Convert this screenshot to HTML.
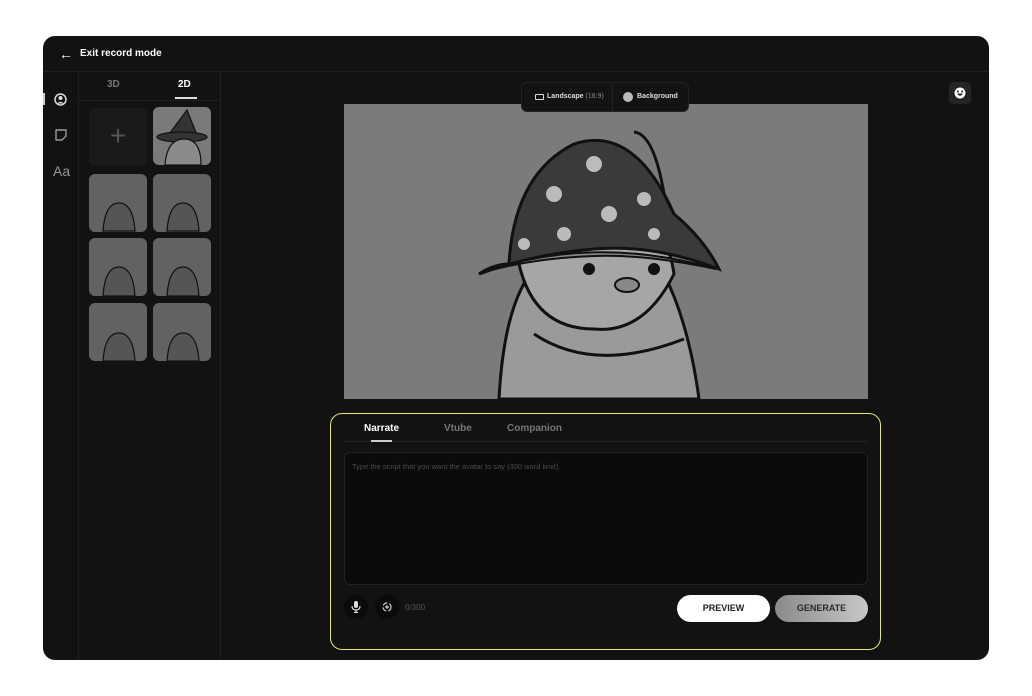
<!DOCTYPE html><html><head><style>
*{box-sizing:border-box;margin:0;padding:0}
body{width:1032px;height:696px;background:#fff;font-family:"Liberation Sans",sans-serif;position:relative;overflow:hidden}
.card{position:absolute;left:43px;top:36px;width:946px;height:624px;background:#121212;border-radius:12px;overflow:hidden}
.a{position:absolute}
.th{position:absolute;width:58px;height:58px;border-radius:6px;background:#626262;overflow:hidden}
</style></head><body>
<div class="card">
 <div class="a" style="left:0;top:35px;width:946px;height:1px;background:#1e1e1e"></div>
 <div class="a" style="left:16px;top:10px;color:#fff;font-size:14px;font-weight:bold">&#8592;</div>
 <div class="a" style="left:37px;top:12px;color:#fff;font-size:10px;font-weight:bold">Exit record mode</div>
 <div class="a" style="left:35px;top:36px;width:1px;height:588px;background:#1e1e1e"></div>
 <div class="a" style="left:177px;top:36px;width:1px;height:588px;background:#1e1e1e"></div>
 <div class="a" style="left:0;top:57px;width:2px;height:12px;background:#ccc"></div>
 <svg class="a" style="left:11px;top:57px" width="13" height="13" viewBox="0 0 13 13"><circle cx="6.5" cy="6.5" r="5.5" fill="none" stroke="#ddd" stroke-width="1.5"/><circle cx="6.5" cy="5" r="2" fill="#ddd"/><path d="M3 10.5Q6.5 7 10 10.5" fill="#ddd"/></svg>
 <svg class="a" style="left:12px;top:93px" width="12" height="12" viewBox="0 0 12 12"><path d="M1 1H11V7L7 11H1Z" fill="none" stroke="#999" stroke-width="1.4" stroke-linejoin="round"/></svg>
 <div class="a" style="left:10px;top:127px;color:#999;font-size:14px">Aa</div>
 <div class="a" style="left:64px;top:43px;color:#777;font-size:10px;font-weight:bold">3D</div>
 <div class="a" style="left:135px;top:43px;color:#fff;font-size:10px;font-weight:bold">2D</div>
 <div class="a" style="left:132px;top:61px;width:22px;height:2px;background:#ddd"></div>
 <div class="a" style="left:36px;top:64px;width:141px;height:1px;background:#1e1e1e"></div>
 <div class="a" style="left:46px;top:72px;width:58px;height:58px;border-radius:6px;background:#1a1a1a;color:#555;font-size:28px;text-align:center;line-height:56px;font-weight:100">+</div>
 <div class="th" style="left:110px;top:71px;background:#7a7a7a"></div>
 <div class="th" style="left:46px;top:138px"></div><div class="th" style="left:110px;top:138px"></div>
 <div class="th" style="left:46px;top:202px"></div><div class="th" style="left:110px;top:202px"></div>
 <div class="th" style="left:46px;top:267px"></div><div class="th" style="left:110px;top:267px"></div>
 <svg class="a" style="left:46px;top:71px" width="168" height="254">
  <g fill="#555" stroke="#111" stroke-width="1.2">
  <path d="M78 30L98 3L108 28Z" fill="#333"/><ellipse cx="93" cy="30" rx="25" ry="5" fill="#333"/>
  <path d="M76 58Q78 32 95 32Q112 32 112 58Z" fill="#8a8a8a"/>
  <path d="M14 189Q16 160 30 160Q44 160 46 189Z"/><path d="M78 189Q80 160 94 160Q108 160 110 189Z"/>
  <path d="M14 254Q16 226 30 226Q44 226 46 254Z"/><path d="M78 254Q80 226 94 226Q108 226 110 254Z"/>
  <path d="M14 124Q16 96 30 96Q44 96 46 124Z"/><path d="M78 124Q80 96 94 96Q108 96 110 124Z"/>
  </g></svg>
 <div class="a" style="left:301px;top:68px;width:524px;height:295px;background:#7b7b7b;overflow:hidden">
  <svg width="524" height="295" viewBox="0 0 524 295">
   <path d="M155 295Q160 200 190 165Q250 140 320 170Q345 220 355 295Z" fill="#9a9a9a" stroke="#111" stroke-width="3"/>
   <path d="M175 160Q190 100 250 100Q320 100 330 170Q300 230 250 225Q190 225 175 160Z" fill="#a6a6a6" stroke="#111" stroke-width="3"/>
   <path d="M165 160Q170 70 230 40Q290 20 330 110Q360 135 375 165Q310 140 250 145Q190 150 135 170Q150 160 165 160Z" fill="#3a3a3a" stroke="#111" stroke-width="3"/>
   <path d="M140 168Q250 130 372 165Q300 150 250 152Q190 154 140 168Z" fill="#888" stroke="#111" stroke-width="2"/>
   <path d="M290 28Q310 30 320 90L330 110" fill="none" stroke="#111" stroke-width="3"/>
   <g fill="#bbb"><circle cx="210" cy="90" r="8"/><circle cx="250" cy="60" r="8"/><circle cx="265" cy="110" r="8"/><circle cx="300" cy="95" r="7"/><circle cx="220" cy="130" r="7"/><circle cx="180" cy="140" r="6"/><circle cx="310" cy="130" r="6"/></g>
   <circle cx="245" cy="165" r="6" fill="#111"/><circle cx="310" cy="165" r="6" fill="#111"/>
   <ellipse cx="283" cy="181" rx="12" ry="7" fill="#888" stroke="#111" stroke-width="2"/>
   <path d="M190 230Q250 270 340 235" fill="none" stroke="#111" stroke-width="3"/>
  </svg>
 </div>
 <div class="a" style="left:478px;top:46px;width:168px;height:30px;background:#131313;border-radius:6px;border:1px solid #222"></div>
 <div class="a" style="left:569px;top:46px;width:1px;height:30px;background:#222"></div>
 <div class="a" style="left:492px;top:58px;width:9px;height:6px;border:1px solid #ddd;border-radius:1px"></div>
 <div class="a" style="left:504px;top:57px;color:#ddd;font-size:7px;font-weight:bold">Landscape <span style="color:#888;font-weight:normal">(16:9)</span></div>
 <div class="a" style="left:580px;top:56px;width:10px;height:10px;border-radius:50%;background:#bbb"></div>
 <div class="a" style="left:594px;top:57px;color:#ddd;font-size:7px;font-weight:bold">Background</div>
 <div class="a" style="left:906px;top:46px;width:22px;height:22px;background:#252525;border-radius:5px"></div>
 <svg class="a" style="left:911px;top:51px" width="12" height="12" viewBox="0 0 12 12"><circle cx="6" cy="6" r="5.5" fill="#fff"/><circle cx="4" cy="4.5" r="1" fill="#252525"/><circle cx="8" cy="4.5" r="1" fill="#252525"/><path d="M3 6.5Q6 11 9 6.5Z" fill="#252525"/></svg>
 <div class="a" style="left:287px;top:377px;width:551px;height:237px;border:1.5px solid #e6e672;border-radius:12px;background:#121212"></div>
 <div class="a" style="left:321px;top:387px;color:#fff;font-size:10px;font-weight:bold">Narrate</div>
 <div class="a" style="left:401px;top:387px;color:#777;font-size:10px;font-weight:bold">Vtube</div>
 <div class="a" style="left:464px;top:387px;color:#777;font-size:10px;font-weight:bold">Companion</div>
 <div class="a" style="left:301px;top:405px;width:524px;height:1px;background:#222"></div>
 <div class="a" style="left:328px;top:404px;width:21px;height:2px;background:#ccc"></div>
 <div class="a" style="left:301px;top:416px;width:524px;height:133px;background:#0b0b0b;border:1px solid #232323;border-radius:6px"></div>
 <div class="a" style="left:309px;top:426px;color:#4a4a4a;font-size:7.5px">Type the script that you want the avatar to say (300 word limit).</div>
 <div class="a" style="left:301px;top:559px;width:24px;height:24px;border-radius:50%;background:#0a0a0a"></div>
 <svg class="a" style="left:308px;top:565px" width="10" height="12" viewBox="0 0 10 12"><rect x="3" y="0" width="4" height="7" rx="2" fill="#ddd"/><path d="M1 5Q1 9 5 9Q9 9 9 5M5 9V11M3 11.5H7" fill="none" stroke="#ddd" stroke-width="1.2"/></svg>
 <div class="a" style="left:332px;top:559px;width:24px;height:24px;border-radius:50%;background:#0a0a0a"></div>
 <svg class="a" style="left:339px;top:566px" width="10" height="10" viewBox="0 0 10 10"><circle cx="5" cy="5" r="4" fill="none" stroke="#ccc" stroke-width="1.2" stroke-dasharray="5 2"/><path d="M5 3V7M3 5H7" stroke="#ccc" stroke-width="1.2"/></svg>
 <div class="a" style="left:362px;top:567px;color:#555;font-size:8px">0/300</div>
 <div class="a" style="left:634px;top:559px;width:93px;height:27px;border-radius:14px;background:#fff;color:#222;font-size:9px;font-weight:bold;text-align:center;line-height:27px">PREVIEW</div>
 <div class="a" style="left:732px;top:559px;width:93px;height:27px;border-radius:14px;background:linear-gradient(90deg,#8a8a8a,#c8c8c8);color:#2a2a2a;font-size:9px;font-weight:bold;text-align:center;line-height:27px">GENERATE</div>
</div>
</body></html>
